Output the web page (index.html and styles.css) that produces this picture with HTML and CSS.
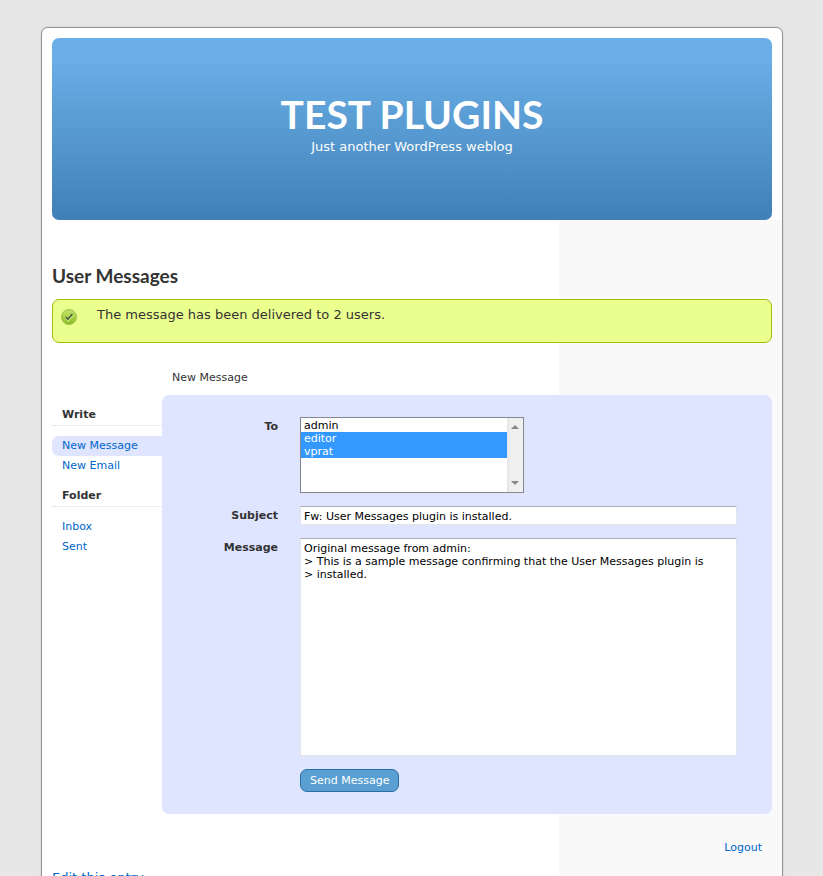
FILE: index.html
```html
<!DOCTYPE html>
<html lang="en">
<head>
<meta charset="utf-8">
<meta name="viewport" content="width=device-width, initial-scale=1">
<title>User Messages</title>
<link rel="stylesheet" href="styles.css">
</head>
<body>
<div class="page">
  <header class="banner">
    <h1 class="banner-title">TEST PLUGINS</h1>
    <p class="banner-tagline">Just another WordPress weblog</p>
  </header>
  <main class="content">
    <h2 class="page-title">User Messages</h2>
    <div class="notice" role="status">
      <svg class="notice-icon" viewBox="0 0 16 16" aria-hidden="true">
        <defs>
          <linearGradient id="ball" x1="0" y1="0" x2="0" y2="1">
            <stop offset="0" stop-color="#c2e26a"/>
            <stop offset="0.5" stop-color="#a9d340"/>
            <stop offset="1" stop-color="#8abb28"/>
          </linearGradient>
        </defs>
        <circle cx="8" cy="8" r="7.5" fill="url(#ball)" stroke="#9dbf4c"/>
        <path d="M4.8 8.3 7.2 10.7 11.4 5.4" fill="none" stroke="#cbe888" stroke-width="3"/>
        <path d="M4.8 8.1 7 10.2 11.4 5.1" fill="none" stroke="#46523a" stroke-width="1.6"/>
      </svg>
      <p class="notice-text">The message has been delivered to 2 users.</p>
    </div>
    <p class="view-name">New Message</p>
    <div class="mailbox">
      <nav class="menu">
        <h3 class="menu-heading">Write</h3>
        <ul class="menu-list">
          <li><a class="menu-link current" href="#new-message">New Message</a></li>
          <li><a class="menu-link" href="#new-email">New Email</a></li>
        </ul>
        <h3 class="menu-heading">Folder</h3>
        <ul class="menu-list">
          <li><a class="menu-link" href="#inbox">Inbox</a></li>
          <li><a class="menu-link" href="#sent">Sent</a></li>
        </ul>
      </nav>
      <form class="compose">
        <label class="label" for="to">To</label>
        <div class="recipients">
          <select class="recipient-list" id="to" multiple size="5">
            <option>admin</option>
            <option selected>editor</option>
            <option selected>vprat</option>
          </select>
          <span class="track" aria-hidden="true">
            <svg class="arrow" viewBox="0 0 8 4"><path d="M0 4 4 0l4 4z"/></svg>
            <svg class="arrow" viewBox="0 0 8 4"><path d="M0 0l4 4 4-4z"/></svg>
          </span>
        </div>
        <label class="label" for="subject">Subject</label>
        <input class="field" id="subject" type="text" value="Fw: User Messages plugin is installed.">
        <label class="label" for="message">Message</label>
        <textarea class="field message" id="message" spellcheck="false">Original message from admin:
&gt; This is a sample message confirming that the User Messages plugin is
&gt; installed.</textarea>
        <button class="send" type="button">Send Message</button>
      </form>
    </div>
    <p class="session"><a href="#logout">Logout</a></p>
    <p class="edit"><a href="#edit">Edit this entry</a>.</p>
  </main>
</div>
</body>
</html>
```
FILE: styles.css
```css
* {
  box-sizing: border-box;
}

body {
  margin: 0;
  padding: 27px 0 0 1px;
  background: #e7e7e7;
  color: #333;
  font: 13px/20px Verdana, "DejaVu Sans", sans-serif;
}

h1, h2, h3, p, ul {
  margin: 0;
  padding: 0;
}

ul {
  list-style: none;
}

a {
  color: #06c;
  text-decoration: none;
}

.page {
  max-width: 742px;
  margin: 0 auto;
  padding-top: 10px;
  background: #fff;
  border: 1px solid #959596;
  border-radius: 7px;
  box-shadow: 0 0 2px #bbb;
}

.banner {
  height: 182px;
  margin: 0 10px;
  padding-top: 52px;
  border-radius: 7px;
  background: linear-gradient(#69aee7 0%, #69aee7 12%, #4180b6 100%);
  color: #fff;
  text-align: center;
}

.banner-title {
  font: bold 39px/48px "Trebuchet MS", Lato, sans-serif;
}

.banner-tagline {
  line-height: 18px;
}

.content {
  padding: 44px 10px 60px;
  background: linear-gradient(#f9f9f9, #f9f9f9) right / 223px 100% no-repeat;
}

.page-title {
  font: bold 19px/24px "Trebuchet MS", Lato, sans-serif;
  margin-bottom: 11px;
}

.notice {
  display: flex;
  gap: 20px;
  height: 44px;
  padding: 5px 8px;
  border: 1px solid #a0bf00;
  border-radius: 7px;
  background: #ebff8f;
}

.notice-icon {
  width: 16px;
  height: 16px;
  margin-top: 4px;
}

.view-name {
  margin-top: 25px;
  padding-left: 120px;
  padding-bottom: 7px;
  font-size: 11px;
}

.mailbox {
  display: flex;
  font-size: 11px;
}

.menu {
  width: 110px;
  padding-top: 10px;
}

.menu-heading {
  height: 21px;
  padding-left: 10px;
  border-bottom: 1px dotted #d5dbe8;
  font-size: 11px;
}

.menu-list {
  margin: 10px 0;
}

.menu-link {
  display: block;
  padding-left: 10px;
}

.menu-link.current {
  border-radius: 7px 0 0 7px;
  background: #dfe4ff;
}

.compose {
  flex: 1;
  display: grid;
  grid-template-columns: 116px 1fr;
  gap: 13px 22px;
  align-items: start;
  padding: 22px 35px 22px 0;
  border-radius: 7px;
  background: #dfe4ff;
}

.label {
  height: 18px;
  font-weight: bold;
  text-align: right;
}

.recipients {
  position: relative;
  width: 224px;
}

.recipient-list {
  display: block;
  width: 100%;
  height: 76px;
  margin: 0;
  padding: 1px 0;
  border: 1px solid #828790;
  border-radius: 0;
  outline: 0;
  background: #fff;
  color: #000;
  font: 11px/13px Verdana, "DejaVu Sans", sans-serif;
}

.recipient-list option {
  height: 13px;
  min-height: 13px;
  padding: 0 3px;
  line-height: 15px;
}

.recipient-list option:checked {
  background: #39f linear-gradient(#39f, #39f);
  color: #fff;
}

/* Scroll track, drawn over the right edge of the list */
.track {
  position: absolute;
  top: 1px;
  right: 1px;
  bottom: 1px;
  display: flex;
  flex-direction: column;
  justify-content: space-between;
  align-items: center;
  width: 16px;
  padding: 7px 0;
  background: linear-gradient(to right, #e6e6e6, #f0f0f0 4px);
  pointer-events: none;
}

.arrow {
  width: 8px;
  height: 4px;
  fill: #888;
}

.field {
  display: block;
  width: 100%;
  height: 19px;
  margin: 0;
  padding: 2px 3px 0;
  border: 1px solid #e3e5ee;
  border-top-color: #abadb3;
  border-radius: 1px;
  outline: 0;
  background: #fff;
  color: #000;
  font: 11px/13px Verdana, "DejaVu Sans", sans-serif;
}

.message {
  height: 218px;
  padding-top: 3px;
  resize: none;
}

.send {
  grid-column: 2;
  justify-self: start;
  height: 23px;
  padding: 0 9px;
  border: 1px solid #2770a4;
  border-radius: 7px;
  background: #5a9fd2;
  color: #fff;
  font: 11px/20px Verdana, "DejaVu Sans", sans-serif;
}

.session {
  margin-top: 24px;
  padding-right: 10px;
  text-align: right;
  font-size: 11px;
}

.edit {
  margin-top: 10px;
}
```
